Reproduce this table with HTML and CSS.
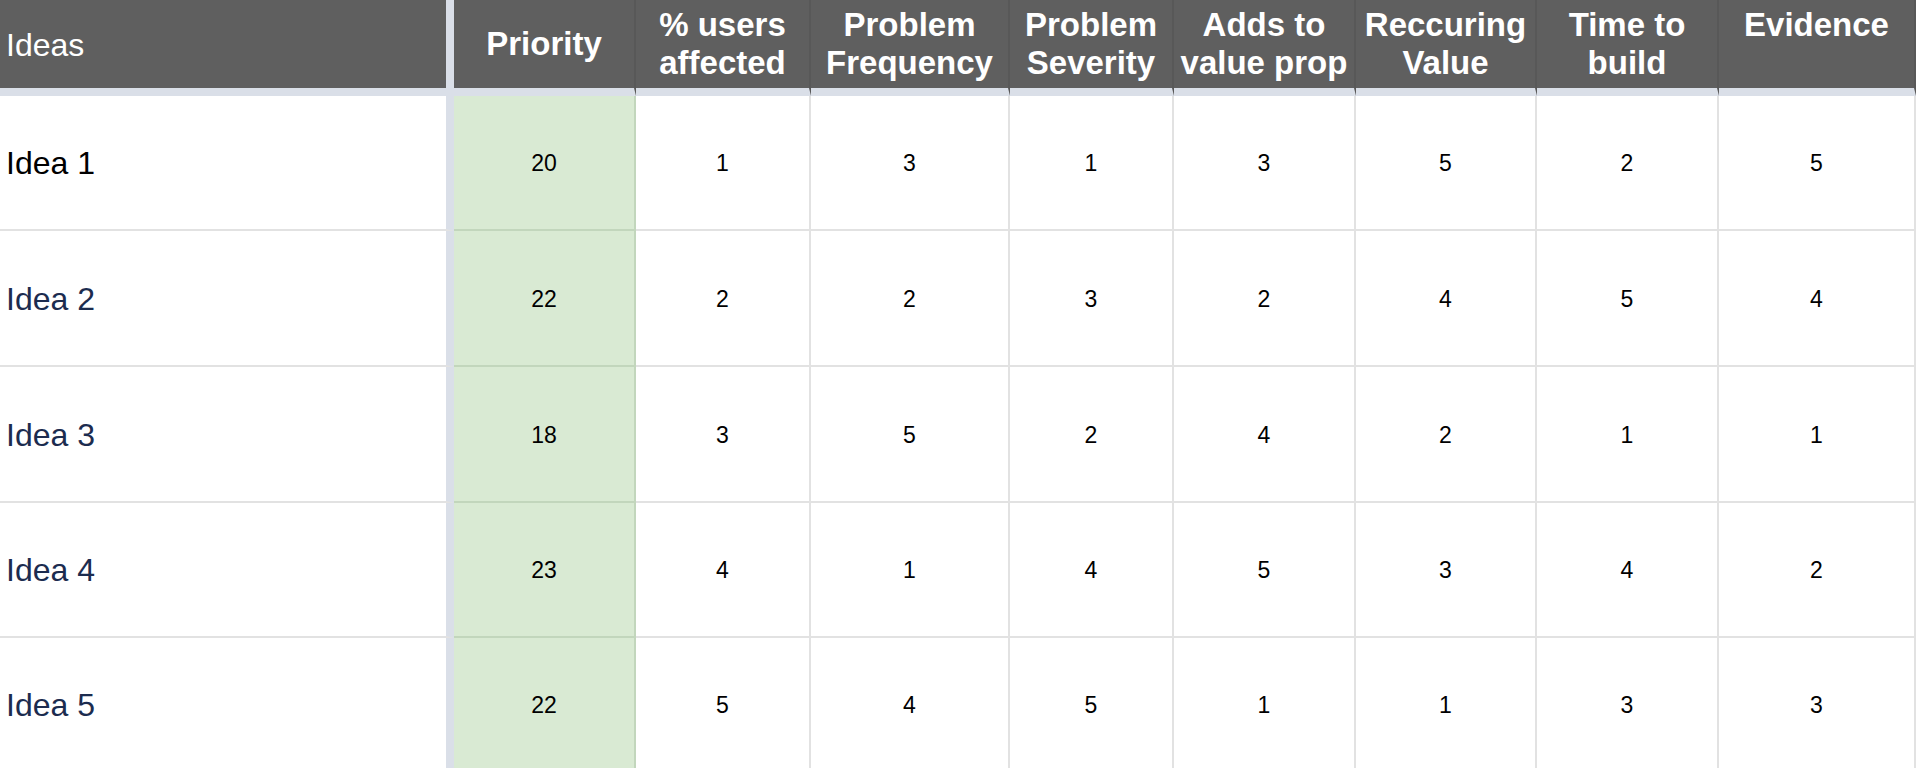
FILE: index.html
```html
<!DOCTYPE html>
<html lang="en">
<head>
<meta charset="utf-8">
<title>Idea prioritisation</title>
<link rel="stylesheet" href="styles.css">
</head>
<body>
<div class="sheet">
  <div class="head head--ideas">Ideas</div>
  <div class="head">Priority</div>
  <div class="head">% users<br>affected</div>
  <div class="head">Problem<br>Frequency</div>
  <div class="head">Problem<br>Severity</div>
  <div class="head">Adds to<br>value prop</div>
  <div class="head">Reccuring<br>Value</div>
  <div class="head">Time to<br>build</div>
  <div class="head head--top">Evidence</div>

  <div class="cell cell--idea cell--idea-first">Idea 1</div>
  <div class="cell cell--priority">20</div>
  <div class="cell">1</div><div class="cell">3</div><div class="cell">1</div><div class="cell">3</div><div class="cell">5</div><div class="cell">2</div><div class="cell">5</div>

  <div class="cell cell--idea">Idea 2</div>
  <div class="cell cell--priority">22</div>
  <div class="cell">2</div><div class="cell">2</div><div class="cell">3</div><div class="cell">2</div><div class="cell">4</div><div class="cell">5</div><div class="cell">4</div>

  <div class="cell cell--idea">Idea 3</div>
  <div class="cell cell--priority">18</div>
  <div class="cell">3</div><div class="cell">5</div><div class="cell">2</div><div class="cell">4</div><div class="cell">2</div><div class="cell">1</div><div class="cell">1</div>

  <div class="cell cell--idea">Idea 4</div>
  <div class="cell cell--priority">23</div>
  <div class="cell">4</div><div class="cell">1</div><div class="cell">4</div><div class="cell">5</div><div class="cell">3</div><div class="cell">4</div><div class="cell">2</div>

  <div class="cell cell--idea">Idea 5</div>
  <div class="cell cell--priority">22</div>
  <div class="cell">5</div><div class="cell">4</div><div class="cell">5</div><div class="cell">1</div><div class="cell">1</div><div class="cell">3</div><div class="cell">3</div>
</div>
</body>
</html>
```

FILE: styles.css
```css
html, body {
  margin: 0;
  padding: 0;
  background: #ffffff;
  overflow: hidden;
}

body {
  font-family: "Liberation Sans", Arial, Helvetica, sans-serif;
}

.sheet {
  display: grid;
  grid-template-columns: 454px 182px 175px 199px 164px 182px 181px 182px 197px;
  grid-template-rows: 96px 135px 136px 136px 135px 135px;
  width: 1916px;
  height: 768px;
  overflow: hidden;
}

.head {
  box-sizing: border-box;
  display: flex;
  align-items: center;
  justify-content: center;
  text-align: center;
  background: #5f5f5f;
  color: #ffffff;
  font-weight: bold;
  font-size: 33px;
  line-height: 38px;
  border-right: 2px solid #585858;
  border-bottom: 8px solid #dadfe8;
  white-space: nowrap;
}

.head--ideas {
  justify-content: flex-start;
  font-weight: normal;
  font-size: 32px;
  padding-left: 6px;
  padding-top: 2px;
  border-right: 8px solid #dadfe8;
}

.head--top {
  align-items: flex-start;
  padding-top: 6px;
}

.cell {
  box-sizing: border-box;
  display: flex;
  align-items: center;
  justify-content: center;
  padding-top: 2px;
  font-size: 23px;
  color: #000000;
  border-right: 2px solid #e2e2e2;
  border-bottom: 2px solid #e2e2e2;
}

.cell--idea {
  justify-content: flex-start;
  padding-left: 6px;
  font-size: 32px;
  color: #1c2c4f;
  border-right: 8px solid #dadfe8;
}

.cell--idea-first {
  color: #000000;
}

.cell--priority {
  background: #d9ead3;
  border-right-color: #c2d6bc;
  border-bottom-color: #c2d6bc;
}
```
